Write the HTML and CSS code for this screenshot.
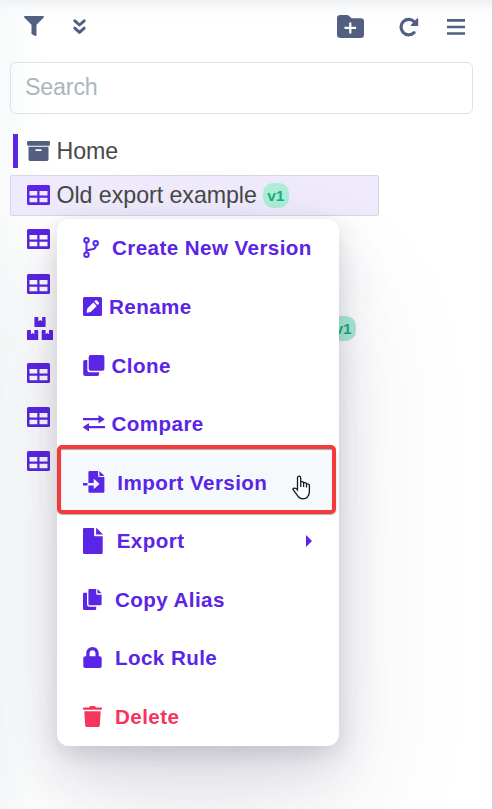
FILE: index.html
```html
<!DOCTYPE html>
<html lang="en">
<head>
<meta charset="utf-8">
<title>Rules</title>
<link rel="stylesheet" href="styles.css">
</head>
<body>
<svg class="defs" aria-hidden="true">
  <symbol id="table" viewBox="0 0 23 20"><path fill-rule="evenodd" d="M1.500 0h20Q23 0 23 1.500v17q0 1.500-1.500 1.500h-20Q0 20 0 18.500v-17Q0 0 1.500 0zM2.500 6v4.500h7.800V6zM12.500 6v4.500h8V6zM2.500 12.800v4.500h7.800v-4.500zM12.500 12.800v4.500h8v-4.500z"/></symbol>
</svg>
<div class="panel">
  <header class="toolbar">
    <svg class="filter" width="20" height="20" viewBox="0 0 512 512"><path d="M488 0H24C3 0-8 26 7 41l185 185v222c0 8 4 15 10 20l80 38c16 11 38 0 38-20V226L505 41c15-15 4-41-17-41z"/></svg>
    <svg class="chevrons" width="13" height="16" viewBox="0 0 13 16"><path d="M1.800 1.800l4.700 4.200 4.700-4.200M1.800 9.200l4.700 4.200L11.200 9.200"/></svg>
    <svg class="folder" width="27" height="23" viewBox="0 0 27 23"><path fill-rule="evenodd" d="M3.300 0h6.500q1.400 0 2.400 1l1.400 1.400q1 .9 2.300.9h7.800q3.300 0 3.300 3.300v13.100q0 3.300-3.300 3.300h-20Q0 23 0 19.700V3.300Q0 0 3.300 0zM12.200 7.500v4.300H7.500v2.200h4.700v4.500h2.200V14h4.700v-2.200h-4.700V7.500z"/></svg>
    <svg class="reload" width="20" height="20" viewBox="0 0 20 20"><path class="arc" d="M15.100 15.600A7.700 7.700 0 1 1 15.500 5"/><path d="M18 1.500q1.200-.7 1.200.7v6q0 .8-.8.8h-6q-1.200-.1-.5-1z"/></svg>
    <svg class="bars" width="18" height="16" viewBox="0 0 18 16"><path d="M0 1.400h18M0 8h18M0 14.500h18"/></svg>
  </header>
  <input class="search" type="text" placeholder="Search">
  <ul class="tree">
    <li class="node home"><svg class="archive" width="23" height="20" viewBox="0 0 24 21"><path fill-rule="evenodd" d="M1 0h22q1 0 1 1v3q0 1-1 1H1Q0 5 0 4V1Q0 0 1 0zM1.500 6h21v13.500q0 1.500-1.500 1.500H3q-1.500 0-1.500-1.500zM9.500 8.700q-.8 0-.8.9t.8.9h5q.8 0 .8-.9t-.8-.9z"/></svg><span>Home</span></li>
    <li class="node selected"><svg class="icon"><use href="#table"/></svg><span>Old export example</span><b class="tag">v1</b></li>
    <li class="node"><svg class="icon"><use href="#table"/></svg></li>
    <li class="node"><svg class="icon"><use href="#table"/></svg></li>
    <li class="node"><svg class="boxes" width="26" height="23" viewBox="0 0 26 23"><path d="M8 0h3.300v4.300l1.900-1.200 1.900 1.200V0H18q.6 0 .6.600v8.900q0 .6-.6.600H8q-.6 0-.6-.6V.6Q7.400 0 8 0zM.600 13h3.300v4.300l1.700-1.200 1.700 1.200V13h3.300q.6 0 .6.600v8.800q0 .6-.6.600H.600q-.6 0-.6-.6v-8.800q0-.6.600-.6zM15.300 13h3.300v4.300l1.700-1.200 1.700 1.200V13h3.400q.6 0 .6.600v8.800q0 .6-.6.600H15.300q-.6 0-.6-.6v-8.800q0-.6.600-.6z"/></svg><b class="tag far">v1</b></li>
    <li class="node"><svg class="icon"><use href="#table"/></svg></li>
    <li class="node"><svg class="icon"><use href="#table"/></svg></li>
    <li class="node"><svg class="icon"><use href="#table"/></svg></li>
  </ul>
</div>
<nav class="menu">
  <a class="item branch"><svg width="16" height="22" viewBox="0 0 16 22"><g class="line"><circle cx="3.500" cy="3.300" r="2.200"/><circle cx="12.700" cy="6.200" r="2.200"/><circle cx="3.500" cy="17.700" r="2.200"/><path d="M3.500 5.500v10M12.700 8.500c0 5-4.500 3.300-9 5"/></g></svg><span>Create New Version</span></a>
  <a class="item rename"><svg width="19" height="19" viewBox="0 0 19 19"><path fill-rule="evenodd" d="M1.500 0h16Q19 0 19 1.500v16q0 1.500-1.500 1.500h-16Q0 19 0 17.500v-16Q0 0 1.500 0zM10.300 5.500l-6 6-.7 3.800q0 .5.500.5l3.600-.8 6-6zM11.200 4.600l3.400 3.400 1-1q.9-.9 0-1.800l-1.600-1.600q-.9-.9-1.800 0z"/></svg><span>Rename</span></a>
  <a class="item clone"><svg width="22" height="21" viewBox="0 0 22 21.400"><path d="M7.600 0h12q2 0 2 2v12q0 2-2 2h-12q-2 0-2-2V2q0-2 2-2zM4.200 5v10q0 2.600 2.600 2.600h9.400v1.800q0 2-2 2H2q-2 0-2-2V7q0-2 2-2z"/></svg><span>Clone</span></a>
  <a class="item compare"><svg width="22" height="17" viewBox="0 0 22 17"><path d="M0 3h15.500V.7q0-.9.700-.3l5 3.300q.6.500 0 1l-5 3.300q-.7.500-.7-.3V5.300H0zM22 11H6V8.800q0-.8-.7-.3l-5 3.300q-.6.500 0 1l5 3.300q.7.500.7-.3v-2.500h16z"/></svg><span>Compare</span></a>
  <a class="item import"><svg width="22" height="22" viewBox="0 0 22 22"><path fill-rule="evenodd" d="M6.700 0h8.400v5.100q0 1 1 1h5.300v14.700q0 .9-.9.900H6.400q-1 0-1-.9v-6.300h5.300v2.700q0 .9.700.3l4.600-4.100q.5-.5 0-1l-4.600-4.100q-.7-.6-.7.300v3.500H5.400V1.200Q5.400 0 6.700 0zM0 12.100h4.500v2.400H0zM16.400 0l5 4.900h-5z"/></svg><span>Import Version</span></a>
  <a class="item export"><svg width="20" height="26" viewBox="0 0 20 26"><path d="M1.200 0h9.900v7q0 1.200 1.200 1.200h7.400v16.600q0 1.200-1.200 1.200H1.200Q0 26 0 24.800V1.200Q0 0 1.200 0zM13.100 0q.5 0 .9.400l5.300 5.300q.4.400.4.900h-6.600z"/></svg><span>Export</span><i class="caret"></i></a>
  <a class="item copy"><svg width="19" height="22" viewBox="0 0 19 22"><path d="M6.600 0h6.600v4.400q0 1.300 1.300 1.300h4.100V15q0 1.300-1.300 1.300H6.600q-1.200 0-1.200-1.300V1.300Q5.400 0 6.600 0zM14.400 0l4.200 4.300h-4.200zM1.200 3.800H4V15q0 2.700 2.700 2.700h6.500v2.100q0 1.300-1.200 1.300H1.200q-1.200 0-1.200-1.300V5.100q0-1.300 1.200-1.300z"/></svg><span>Copy Alias</span></a>
  <a class="item lock"><svg width="19" height="21" viewBox="0 0 448 512"><path d="M400 224h-24v-72C376 68 308 0 224 0S72 68 72 152v72H48c-27 0-48 21-48 48v192c0 27 21 48 48 48h352c27 0 48-21 48-48V272c0-27-21-48-48-48zm-104 0H152v-72c0-40 32-72 72-72s72 32 72 72v72z"/></svg><span>Lock Rule</span></a>
  <a class="item delete"><svg width="19" height="21" viewBox="0 0 19 21"><path d="M.7 1.500H6L6.700.4Q7 0 7.500 0h4q.5 0 .8.400l.7 1.100h5.300q.7 0 .7.700V3q0 .7-.7.700H.7Q0 3.700 0 3v-.8q0-.7.700-.7zM1.300 5.200h16.400l-.9 14.200q-.1 1.600-1.700 1.600H3.900q-1.600 0-1.700-1.600z"/></svg><span>Delete</span></a>
  <div class="highlight"></div>
  <svg class="cursor" width="20" height="26" viewBox="0 0 20 26"><path d="M5.500 14.800V3Q5.500 1.200 7.100 1.200T8.700 3v9V6.800q2.900-.6 2.900 1.400V12 7.700q2.900-.6 2.900 1.400V12.500 9q2.900-.3 2.900 1.600v6.200q0 3-2 5.300-1.500 1.700-4.500 1.700-3.300 0-5-2.600L1.500 15.200Q.4 13.700 1.500 13.300q2-.7 4 1.500z"/></svg>
</nav>
</body>
</html>
```
FILE: styles.css
```css
* { box-sizing: border-box; }
body {
  margin: 0;
  height: 809px;
  overflow: hidden;
  position: relative;
  font-family: "Liberation Sans", Arial, sans-serif;
  background: #fff;
}
.defs { display: none; }
svg { display: block; flex: none; fill: currentColor; overflow: visible; }
.panel {
  height: 809px;
  border-right: 1px solid #d2d3d6;
  background:
    linear-gradient(180deg, #f0f1f4 0, rgba(248, 249, 250, .6) 10px, rgba(255, 255, 255, 0) 25px),
    linear-gradient(90deg, #f7f9fa 0, #fdfefe 28px, #fff 50px);
}
.toolbar {
  display: flex;
  align-items: center;
  height: 53px;
  padding: 0 0 1px 24px;
  color: #525f7f;
}
.chevrons { margin: 1px 0 0 29px; fill: none; stroke: currentColor; stroke-width: 3; stroke-linecap: round; stroke-linejoin: round; }
.folder { margin-left: 251px; }
.reload { margin: 1px 0 0 35px; }
.arc { fill: none; stroke: currentColor; stroke-width: 3.200; stroke-linecap: round; }
.bars { margin: 1px 0 0 28px; stroke: currentColor; stroke-width: 2.600; }
.search {
  display: block;
  width: 463px;
  height: 52px;
  margin: 9px 0 0 10px;
  padding: 0 14px 2px;
  border: 1px solid #dee2e6;
  border-radius: 6px;
  background: transparent;
  font: 23.300px "Liberation Sans", Arial, sans-serif;
  letter-spacing: -.2px;
  outline: 0;
}
.search::placeholder { color: #adb5bd; opacity: 1; }
.tree { list-style: none; margin: 16.600px 0 0 10px; padding: 0; }
.node {
  display: flex;
  align-items: center;
  width: 369px;
  height: 41px;
  margin-bottom: 3.400px;
  padding-left: 16.500px;
  font-size: 23.200px;
  line-height: 40px;
  color: #484848;
}
.node span { margin-left: 7px; letter-spacing: -.04px; }
.icon { width: 23px; height: 20px; color: #5a25e4; }
.home { padding-left: 3px; margin-bottom: 3px; }
.home::before { content: ""; width: 5px; height: 34px; margin-right: 8.500px; background: #5a25e4; }
.home span { margin-left: 7px; }
.archive { color: #525f7f; }
.selected { padding-left: 15.500px; border: 1px solid #d9d4e6; border-radius: 2px; background: #efeafc; }
.selected .icon { margin-top: -1px; }
.boxes { color: #5a25e4; }
.tag {
  width: 26px;
  height: 25px;
  margin-left: 6px;
  border-radius: 10px;
  background: #aeeed8;
  color: #1aae80;
  font-size: 15.500px;
  line-height: 25px;
  text-align: center;
}
.tag.far { margin-left: 277.500px; }
.menu {
  position: absolute;
  left: 57px;
  top: 219px;
  width: 282px;
  border-radius: 12px;
  background: #fff;
  color: #5a25e4;
  box-shadow: 0 72px 143px rgba(50, 50, 93, .1), 0 21px 50px rgba(50, 50, 93, .15), 0 7px 21px rgba(0, 0, 0, .1);
}
.item {
  display: flex;
  align-items: center;
  height: 58.550px;
  padding: 0 27px 0 26px;
  font-weight: 700;
  font-size: 20.600px;
  letter-spacing: .42px;
  white-space: nowrap;
}
.item span { position: relative; top: .5px; }
.line { fill: none; stroke: currentColor; stroke-width: 2; }
.branch span { margin-left: 13px; top: 0; }
.rename span { margin-left: 7px; }
.clone span, .compare span { margin-left: 6.500px; }
.import { background: #f6f9fc; }
.import span { margin-left: 12.300px; }
.export span { margin-left: 13.700px; top: 0; }
.copy span, .lock span, .delete span { margin-left: 13px; }
.lock span { top: 0; }
.lock svg, .delete svg { margin-top: -1px; }
.delete { color: #f5365c; }
.caret { margin-left: auto; border: 6px solid transparent; border-right: 0; border-left-color: currentColor; }
.highlight {
  position: absolute;
  left: 0;
  top: 226px;
  width: 279px;
  height: 69px;
  border: 4px solid #f33b3b;
  border-radius: 5px;
  box-shadow: inset 0 1px 1px rgba(0, 0, 0, .35), 0 1px 1px rgba(0, 0, 0, .3);
}
.cursor { position: absolute; left: 235px; top: 256px; fill: #fff; stroke: #16162a; stroke-width: 1.300; }
```
